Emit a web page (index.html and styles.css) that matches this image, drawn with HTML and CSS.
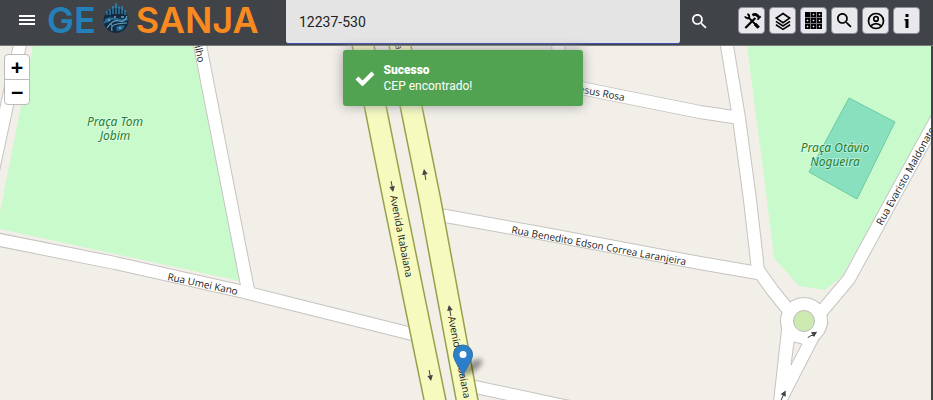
FILE: index.html
```html
<!DOCTYPE html>
<html lang="pt-BR">
<head>
<meta charset="utf-8">
<title>GeoSanja</title>
<link rel="stylesheet" href="styles.css">
</head>
<body>
<header class="bar">
  <button class="menu" aria-label="Menu">
    <svg viewBox="0 0 16 10" width="16" height="10"><path d="M0 1h16M0 5h16M0 9h16" stroke="#fff" stroke-width="2"/></svg>
  </button>
  <a class="logo" href="#" aria-label="GeoSanja">
    <span class="geo">GE</span>
    <svg class="globe" viewBox="0 0 28 32" width="28" height="32">
      <path d="M4 15V10h2V7h3v2h1V4h2v4l2-7 2 6V3h2v5l3-4v4h2v7z" fill="#205a7c"/>
      <circle cx="14" cy="18.500" r="12.500" fill="#142a40"/>
      <path d="M5 13V9M8 13V7M11 12V4M14 12V1M17 12V5M20 12V4M23 13V8" stroke="#3f9fca" stroke-width="1"/>
      <path d="M2 21Q7 15 14 17T26 17" fill="none" stroke="#276a91" stroke-width="2"/>
      <path d="M5 26Q11 17 17 19T25 14M10 29Q8 23 15 22T25 21" fill="none" stroke="#5fa8c8" stroke-width="1.200"/>
      <path d="M3 17l5-2 3 2-4 3-4 1zM14 25l5-2 4 1-3 4-5 1z" fill="#276a91"/>
      <path d="M6 18h2M9 23h1M19 15h3M17 26h2M12 15h2" stroke="#a4dced"/>
    </svg>
    <span class="sanja">SANJA</span>
  </a>
  <form class="search">
    <input class="field" type="text" aria-label="Pesquisar CEP" value="12237-530">
    <button class="go" type="button" aria-label="Pesquisar">
      <svg viewBox="3 3 18 18" width="15" height="15" fill="#fff"><path d="M15.500 14h-.79l-.28-.27C15.410 12.590 16 11.110 16 9.500 16 5.910 13.090 3 9.500 3S3 5.910 3 9.500 5.910 16 9.500 16c1.610 0 3.090-.59 4.230-1.570l.27.28v.79l5 4.990L20.490 19zM9.500 14C7.010 14 5 11.990 5 9.500S7.010 5 9.500 5 14 7.010 14 9.500 11.990 14 9.500 14z"/></svg>
    </button>
  </form>
  <nav class="tools">
    <button class="tool" aria-label="Ferramentas"><svg viewBox="0 0 24 24" width="20" height="20" fill="none" stroke="#000"><path d="M4 20.500L16 8.500" stroke-width="2.600"/><path d="M8 8L20 20" stroke-width="2.400"/><path d="M15.500 15.500L20 20" stroke-width="4"/><path d="M12.500 5Q16 3 18 5L20.500 7.500" stroke-width="3.400"/><path d="M18.500 10.500L22.500 6.500" stroke-width="2"/><path d="M6.500 3.500Q9.500 5 8.500 8.500 5 9.500 3.500 6.500" stroke-width="2.200"/></svg></button>
    <button class="tool" aria-label="Camadas"><svg viewBox="0 0 24 24" width="20" height="20" fill="none" stroke="#000" stroke-width="1.900"><path d="M12 3l8 5.500-8 5.500-8-5.500zM3.500 12.500L12 18l8.500-5.500M3.500 16.500L12 22l8.500-5.500"/></svg></button>
    <button class="tool" aria-label="Grade"><svg viewBox="0 0 17 17" width="17" height="17"><path d="M0 0h5v5H0zM6 0h5v5H6zM12 0h5v5h-5zM0 6h5v5H0zM6 6h5v5H6zM12 6h5v5h-5zM0 12h5v5H0zM6 12h5v5H6zM12 12h5v5h-5z"/><path d="M8 2h1v1H8zM14 2h1v1h-1zM2 8h1v1H2zM8 8h1v1H8zM14 8h1v1h-1zM2 14h1v1H2zM8 14h1v1H8zM14 14h1v1h-1z" fill="#e9e9ed" stroke="#e9e9ed" stroke-width=".6"/><path d="M5.500 0v17M11.500 0v17M0 5.500h17M0 11.500h17" stroke="#77777c"/></svg></button>
    <button class="tool" aria-label="Buscar"><svg viewBox="3 3 18 18" width="15" height="15"><path d="M15.500 14h-.79l-.28-.27C15.410 12.590 16 11.110 16 9.500 16 5.910 13.090 3 9.500 3S3 5.910 3 9.500 5.910 16 9.500 16c1.610 0 3.090-.59 4.230-1.570l.27.28v.79l5 4.990L20.490 19zM9.500 14C7.010 14 5 11.990 5 9.500S7.010 5 9.500 5 14 7.010 14 9.500 11.990 14 9.500 14z"/></svg></button>
    <button class="tool" aria-label="Conta"><svg viewBox="0 0 24 24" width="20" height="20" fill="none" stroke="#000" stroke-width="2"><circle cx="12" cy="12" r="9"/><circle cx="12" cy="9.500" r="2.700"/><path d="M5.500 18Q12 12.500 18.500 18"/></svg></button>
    <button class="tool" aria-label="Informações"><svg viewBox="0 0 6 16" width="6" height="16"><path d="M1.500 1h3v3h-3zM.5 6h4v9h-3V7.500h-1z"/></svg></button>
  </nav>
</header>
<main class="map">
  <svg class="tiles" viewBox="0 46 931 354" preserveAspectRatio="xMinYMin slice" role="img" aria-label="Mapa">
    <defs>
      <path id="roads" d="M21 40L-8 175M199 40L248 290M-5 239L115 263 244 292 300 306 420 336M440 215L540 233 700 263 758 273M557 30L561 84 630 98 700 112 740 118M726 40L739 118 750 200 758 270 773 291 790 312M817 317L849 279 892 200 931 129 950 95M466 385L560 405 620 417"/>
      <path id="arrow" d="M0 5V-4M-2-1L0-5 2-1z"/>
      <linearGradient id="pin" x1="0" y1="0" x2="0" y2="1"><stop offset="0" stop-color="#2e83c5"/><stop offset="1" stop-color="#2b7bd0"/></linearGradient>
      <filter id="soft" x="-50%" y="-50%" width="200%" height="200%"><feGaussianBlur stdDeviation="2.500"/></filter>
    </defs>
    <path class="park" d="M33 46H193L240 281 0 229V212zM747 46H940V100L885 200 842 276 825 290 799 286 774 258 767 200z"/>
    <path class="pitch" d="M849 98L895 122 857 199 809 172z"/>
    <g class="casing"><use href="#roads"/><circle cx="804" cy="321" r="23"/><path d="M782 325V330L774 402H786L819 338 827 324z"/></g>
    <g class="road"><use href="#roads"/><circle cx="804" cy="321" r="23"/><path d="M782 325V330L774 402H786L819 338 827 324z"/></g>
    <path class="island" d="M794 342L802 344 791 365z"/>
    <circle class="round" cx="804" cy="321" r="10.500"/>
    <path class="avenue-edge" d="M362 40L394 200 436 405M399 40L411 106 430 200 468 405"/>
    <path class="avenue" d="M362 40L394 200 436 405M399 40L411 106 430 200 468 405"/>
    <g class="arrows">
      <use href="#arrow" transform="translate(392 186) rotate(170)"/>
      <use href="#arrow" transform="translate(425 175) rotate(-10)"/>
      <use href="#arrow" transform="translate(430 375) rotate(170)"/>
      <use href="#arrow" transform="translate(450 311) rotate(-10)"/>
      <use href="#arrow" transform="translate(812 335) rotate(58)"/>
      <use href="#arrow" transform="translate(783 396) rotate(25)"/>
    </g>
    <g class="street">
      <text transform="translate(167 280) rotate(12)">Rua Umei Kano</text>
      <text transform="translate(511 233) rotate(10.500)">Rua Benedito Edson Correa Laranjeira</text>
      <text text-anchor="end" transform="translate(624 101) rotate(11)">Rua Jesus Rosa</text>
      <text text-anchor="end" transform="translate(198 63) rotate(78)">Carvilho</text>
      <text transform="translate(390 196) rotate(79)">Avenida Itabaiana</text>
      <text transform="translate(448 317) rotate(79)">Avenida Itabaiana</text>
      <text text-anchor="end" transform="translate(396 50) rotate(79)">Avenida Itabaiana</text>
      <text transform="translate(882 226) rotate(-61)">Rua Evaristo Maldonato</text>
    </g>
    <g class="place">
      <text x="115" y="126">Praça Tom</text><text x="115" y="140">Jobim</text>
      <text x="835" y="152">Praça Otávio</text><text x="835" y="166">Nogueira</text>
    </g>
    <ellipse cx="472" cy="367" rx="12" ry="5" transform="rotate(-35 472 367)" fill="#000" opacity=".4" filter="url(#soft)"/>
    <path d="M463 376C461 369 453.500 361 453.500 354.500A9.500 9.500 0 0 1 472.500 354.500C472.500 361 465 369 463 376z" fill="url(#pin)" stroke="#2a6da8"/>
    <circle cx="463" cy="354.500" r="3.500" fill="#fff"/>
  </svg>
  <div class="zoom">
    <button class="step" aria-label="Aproximar">+</button>
    <button class="step" aria-label="Afastar">−</button>
  </div>
</main>
<div class="toast" role="alert">
  <svg viewBox="0 0 20 16" width="20" height="16"><path d="M2 8l5.500 5.500L18 3" fill="none" stroke="#fff" stroke-width="4.200"/></svg>
  <div><strong class="title">Sucesso</strong><p class="message">CEP encontrado!</p></div>
</div>
</body>
</html>
```
FILE: styles.css
```css
* { box-sizing: border-box; }
body {
  margin: 0;
  min-height: 100vh;
  display: flex;
  flex-direction: column;
  background: #404347;
  font-family: Roboto, sans-serif;
}
button { padding: 0; border: 0; background: none; cursor: pointer; }
svg { display: block; flex: none; }
.bar {
  display: flex;
  height: 46px;
  padding: 0 13px 0 19px;
  border-bottom: 1px solid #77787a;
  background: #404347;
}
.menu { display: flex; align-items: center; padding-bottom: 6px; }
.logo {
  display: flex;
  align-items: center;
  width: 251px;
  padding: 0 0 5px 12px;
  gap: 6px;
  font: 600 36px/40px Inter, sans-serif;
  text-decoration: none;
}
.geo { color: #2480b8; }
.sanja { color: #f98a1f; }
.globe { margin-bottom: 4px; }
.search { display: flex; flex: 1; }
.field {
  flex: 1;
  min-width: 0;
  height: 44px;
  padding: 0 13px;
  border: 0;
  border-bottom: 1px solid #3f51b5;
  border-radius: 0 0 3px 3px;
  background: #e4e4e4;
  color: #222;
  font: 14px Roboto, sans-serif;
  outline: 0;
}
.go { padding: 0 31px 3px 12px; }
.tools { display: flex; align-items: center; gap: 4px; padding-bottom: 4px; }
.tool {
  display: grid;
  place-items: center;
  width: 27px;
  height: 27px;
  border: 1px solid #8f8f9d;
  border-radius: 4px;
  background: #e9e9ed;
}
.map {
  position: relative;
  flex: 1;
  display: flex;
  margin-right: 2px;
  background: #f2efe9;
  overflow: hidden;
}
.tiles { flex: 1; min-width: 0; }
.park { fill: #c8facc; }
.pitch { fill: #88e0be; stroke: #6fc9a4; }
.casing { fill: #fff; stroke: #c6c4c1; stroke-width: 14px; }
.casing circle, .casing path { stroke-width: 2px; }
.road { fill: #fff; stroke: #fff; stroke-width: 12px; }
.road circle, .road path { stroke: none; }
#roads { fill: none; stroke: inherit; stroke-width: inherit; stroke-linejoin: round; }
.island { fill: #f2efe9; stroke: #c6c4c1; }
.round { fill: #cdebb0; stroke: #bbb; }
.avenue-edge, .avenue { fill: none; }
.avenue-edge { stroke: #98a04a; stroke-width: 23px; }
.avenue { stroke: #f6fabf; stroke-width: 20px; }
.arrows { fill: #444; stroke: #444; stroke-width: 1px; }
.street {
  font: 500 10px "Open Sans", sans-serif;
  fill: #222;
  text-rendering: geometricPrecision;
}
.place {
  font: italic 12px "Noto Sans", sans-serif;
  fill: #22802f;
  text-anchor: middle;
  stroke: #fff6;
  stroke-width: 2px;
  paint-order: stroke;
}
.zoom {
  position: absolute;
  top: 8px;
  left: 4px;
  width: 26px;
  border: 1px solid #bbb;
  border-radius: 4px;
  background: #fff;
  overflow: hidden;
}
.step {
  display: block;
  width: 24px;
  height: 24px;
  font: bold 20px/24px "DejaVu Sans Mono", monospace;
  color: #000;
}
.step + .step { height: 25px; border-top: 1px solid #bbb; }
.toast {
  position: absolute;
  top: 50px;
  left: calc(50% - 124px);
  display: flex;
  align-items: center;
  gap: 9px;
  width: 240px;
  height: 56px;
  padding: 0 12px;
  border-radius: 3px;
  background: #51a351;
  box-shadow: 0 0 12px #999;
  color: #fff;
  font-size: 12px;
  line-height: 16px;
}
.title { display: block; font-weight: 900; }
.message { margin: 0; }
```
